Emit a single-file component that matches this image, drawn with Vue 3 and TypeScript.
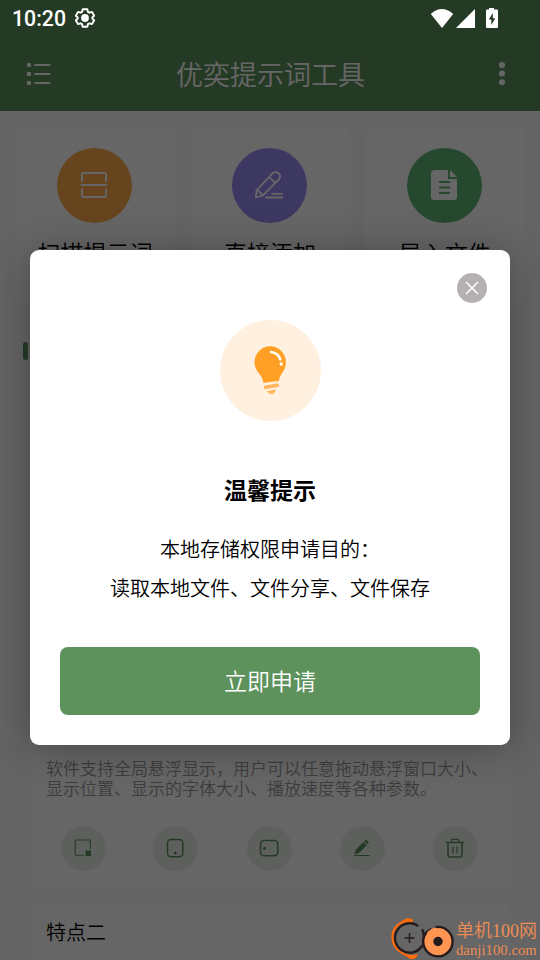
<script setup lang="ts">
interface Shortcut {
  label: string
  kind: 'scan' | 'edit' | 'file'
}

const shortcuts: Shortcut[] = [
  { label: '扫描提示词', kind: 'scan' },
  { label: '直接添加', kind: 'edit' },
  { label: '导入文件', kind: 'file' },
]

const tools: string[] = ['resize', 'portrait', 'landscape', 'pencil', 'trash']
</script>

<template>
  <div class="screen" lang="zh-CN">
    <header class="header">
      <svg class="menu" viewBox="0 0 24 24">
        <g fill="#fff">
          <rect x="0" y="1" width="4" height="4" rx="1" />
          <rect x="0" y="10" width="4" height="4" rx="1" />
          <rect x="0" y="19" width="4" height="4" rx="1" />
          <rect x="7" y="2" width="16.500" height="2" rx="1" />
          <rect x="7" y="11" width="16.500" height="2" rx="1" />
          <rect x="7" y="20" width="16.500" height="2" rx="1" />
        </g>
      </svg>
      <h1 class="title">优奕提示词工具</h1>
      <svg class="more" viewBox="0 0 6 24">
        <g fill="#fff">
          <circle cx="3" cy="3" r="3" />
          <circle cx="3" cy="11.600" r="3" />
          <circle cx="3" cy="20.300" r="3" />
        </g>
      </svg>
    </header>

    <section class="shortcuts">
      <div v-for="item in shortcuts" :key="item.kind" class="shortcut">
        <div class="disc" :class="item.kind">
          <svg v-if="item.kind === 'scan'" width="28" height="28" viewBox="0 0 28 28" fill="none" stroke="#fff" stroke-width="2">
            <path d="M2 11V3.500Q2 2 3.500 2H24.500Q26 2 26 3.500V11M2 17.500V24.500Q2 26 3.500 26H24.500Q26 26 26 24.500V17.500" />
            <path d="M1.500 14H26.500" stroke-linecap="round" />
          </svg>
          <svg v-else-if="item.kind === 'edit'" width="30" height="28" viewBox="0 0 30 28" fill="none" stroke="#fff" stroke-width="1.800" stroke-linejoin="round" stroke-linecap="round">
            <path d="M1.800 26.500L2.600 19.300L18.500 2.300C21.500 -.2 24.700 1.800 25.700 3.700C26.500 5.600 26 7.200 24.700 8.500L9 24.300L1.800 26.500Z" />
            <path d="M15.500 6.300L21 11.800M3.200 18.800L8.700 24M12 26.500H28.300M18 22.800H28.300" />
          </svg>
          <svg v-else width="28" height="32" viewBox="0 0 28 32">
            <path fill="#fff" d="M5 1H18V10H27V28Q27 31 24 31H4Q1 31 1 28V5Q1 1 5 1Z" />
            <path fill="#fff" d="M20 1V8H27Z" />
            <path class="lines" d="M9 13H20M9 18.500H20M9 24H20" fill="none" stroke-width="2" />
          </svg>
        </div>
        <span class="shortcut-label">{{ item.label }}</span>
      </div>
    </section>

    <div class="section-mark"></div>

    <section class="feature main-feature">
      <p class="desc">软件支持全局悬浮显示，用户可以任意拖动悬浮窗口大小、显示位置、显示的字体大小、播放速度等各种参数。</p>
      <div class="tools">
        <div v-for="tool in tools" :key="tool" class="tool" :class="tool">
          <svg width="20" height="20" viewBox="0 0 20 20" fill="none" stroke="#5d925d" stroke-width="1.500">
            <template v-if="tool === 'resize'">
              <path d="M17.300 11V2.500Q17.300 2 16.800 2H3Q2.200 2 2.200 2.800V16.500Q2.200 17.300 3 17.300H11" stroke-width="1.100" />
              <rect x="12.500" y="12.500" width="5.500" height="5.500" fill="#5d925d" stroke="none" />
            </template>
            <template v-else-if="tool === 'portrait'">
              <rect x="2.500" y="1.500" width="15.300" height="17.300" rx="3.500" />
              <circle cx="10.200" cy="15" r="1.500" fill="#5d925d" stroke="none" />
            </template>
            <template v-else-if="tool === 'landscape'">
              <rect x="1.500" y="2.500" width="17.300" height="15.300" rx="3.500" />
              <circle cx="5.500" cy="10.200" r="1.500" fill="#5d925d" stroke="none" />
            </template>
            <template v-else-if="tool === 'pencil'">
              <path d="M2.500 16.500L4 11.500L11.500 4L14.700 7.200L7 15Z" fill="#5d925d" stroke="none" />
              <path d="M12.300 3.200L13.500 2Q14 1.700 14.600 2.200L16.500 4.200Q17 4.700 16.500 5.200L15.500 6.400Z" fill="#5d925d" stroke="none" />
              <path d="M2 17.500H17.500" stroke-width="1" />
            </template>
            <template v-else>
              <path d="M.7 4.500H19.300M6.500 4V2Q6.500 1.300 7.200 1.300H12.800Q13.500 1.300 13.500 2V4" stroke-width="1.300" />
              <path d="M3 4.500V17Q3 19 5 19H15Q17 19 17 17V4.500" />
              <path d="M8 8.500V15.500M12 8.500V15.500" stroke-width="1.200" />
            </template>
          </svg>
        </div>
      </div>
    </section>

    <section class="feature next-feature">
      <h2 class="feature-title">特点二</h2>
    </section>

    <div class="mask">
      <div class="dialog">
        <button class="close" aria-label="关闭">
          <svg width="14" height="14" viewBox="0 0 14 14">
            <path d="M1.500 1.500L12.500 12.500M12.500 1.500L1.500 12.500" stroke="#fff" stroke-width="1.500" stroke-linecap="round" />
          </svg>
        </button>
        <div class="bulb">
          <svg width="101" height="101" viewBox="0 0 101 101">
            <path d="M43.500 63C42.500 54 34.500 52 34.500 42A15.700 15.700 0 0 1 65.900 42C66 52 59.500 53 59 61Q51 61.300 43.500 63Z" fill="#ffa024" />
            <path d="M51 32Q58.500 33 60.300 39.500" fill="none" stroke="#fff" stroke-width="2.600" stroke-linecap="round" />
            <circle cx="61.200" cy="44" r="1.700" fill="#fff" />
            <path d="M45.500 67.300L57.300 65.300" stroke="#ffb65c" stroke-width="3.700" stroke-linecap="round" />
            <path d="M46.500 71.300L55.500 69.500C55.500 73 52.800 74.500 50.500 74C48.500 73.500 48 72 46.500 71.300Z" fill="#ffb65c" />
          </svg>
        </div>
        <h2 class="dialog-title">温馨提示</h2>
        <p class="dialog-text">本地存储权限申请目的<span class="colon">：</span><br />读取本地文件、文件分享、文件保存</p>
        <button class="apply">立即申请</button>
      </div>
    </div>

    <div class="status">
      <span class="time">10:20</span>
      <svg class="gear" width="20" height="20" viewBox="0 0 20 20">
        <path d="M7.700 1.200H12.300L12.900 3.800L14.500 4.700L17 3.900L19.200 7.700L17.300 9.400V10.600L19.200 12.300L17 16.100L14.500 15.300L12.900 16.200L12.300 18.800H7.700L7.100 16.200L5.500 15.300L3 16.100L.8 12.300L2.700 10.600V9.400L.8 7.700L3 3.900L5.500 4.700L7.100 3.800Z" fill="none" stroke="#fff" stroke-width="1.900" stroke-linejoin="round" />
        <circle cx="10" cy="10" r="3.900" fill="#fff" />
      </svg>
      <svg class="signals" width="68" height="22" viewBox="0 0 68 22" fill="#fff">
        <path d="M.8 7Q11.800-3 23.200 7L12 21Z" />
        <path d="M45 2V21H26Z" />
        <path fill-rule="evenodd" d="M59 1H64V2.500H67Q68 2.500 68 3.500V20Q68 21 67 21H57Q56 21 56 20V3.500Q56 2.500 57 2.500H59ZM62.800 6L58.800 12.600H61.300V18L65.300 11.300H62.800Z" />
      </svg>
    </div>

    <div class="watermark">
      <svg width="66" height="44" viewBox="0 0 66 44" fill="none">
        <path d="M22 4.500C10 4 2.500 12 2.500 21C2.500 31 10 38 21 40.500" stroke="#ff6b0a" stroke-width="2.200" />
        <path d="M10 7C14 2 20 1 23 4L22 7Q15 5 10 8ZM15 38Q21 40 28 38Q26 44 21 43Q17 42 15 38Z" fill="#ff6b0a" />
        <path d="M27.500 9.500A14.700 14.700 0 1 0 32 30" stroke="#251b1c" stroke-width="2.300" stroke-linecap="round" />
        <path d="M19.500 17V27M14.500 22H24.500" stroke="#251b1c" stroke-width="1.500" />
        <path d="M32.500 14Q35 20 33 28M36 18Q37 15 40.500 13.500" stroke="#251b1c" stroke-width="2.300" stroke-linecap="round" />
        <circle cx="48" cy="25.500" r="14" fill="#ff9550" />
        <path d="M46.500 11A14.700 14.700 0 1 1 36 17" stroke="#251b1c" stroke-width="2.300" stroke-linecap="round" />
        <circle cx="48" cy="25.500" r="4.700" fill="#251b1c" />
      </svg>
      <div class="brand">
        <span class="brand-name">单机100网</span>
        <span class="brand-url">danji100.com</span>
      </div>
    </div>
  </div>
</template>

<style>
body {
  margin: 0;
  overflow: hidden;
}
</style>

<style scoped>
.screen {
  position: relative;
  display: flex;
  flex-direction: column;
  width: 540px;
  height: 960px;
  overflow: hidden;
  background: #f9f9f9;
  color: #000;
  font-family: "Noto Sans CJK SC", sans-serif;
  font-weight: 350;
}

h1,
h2,
p {
  margin: 0;
  font-weight: inherit;
}

svg {
  display: block;
}

button {
  padding: 0;
  border: 0;
  font-family: inherit;
  font-weight: inherit;
}

.header {
  box-sizing: border-box;
  flex: none;
  display: flex;
  align-items: center;
  justify-content: space-between;
  height: 111px;
  padding: 37px 35px 0 27px;
  background: #5d925d;
  color: #fff;
}

.menu {
  width: 24px;
  height: 24px;
}

.title {
  margin: -1px 9px 0 0;
  font-size: 27px;
  line-height: 40px;
}

.more {
  width: 6px;
  height: 24px;
}

.shortcuts {
  flex: none;
  display: grid;
  grid-template-columns: repeat(3, 160px);
  gap: 15px;
  padding: 15px 15px 0;
}

.shortcut {
  box-sizing: border-box;
  display: flex;
  flex-direction: column;
  align-items: center;
  height: 180px;
  padding: 22px 1px 0 0;
  border-radius: 10px;
  background: #fff;
}

.disc {
  display: flex;
  align-items: center;
  justify-content: center;
  width: 75px;
  height: 75px;
  border-radius: 50%;
}

.disc svg {
  margin: -1px 1px 0 0;
}

.scan {
  background: #ffab4d;
}

.edit {
  background: #988cf5;
}

.file {
  background: #5fb473;
}

.lines {
  stroke: #5fb473;
}

.shortcut-label {
  margin-top: 12px;
  padding-left: 1px;
  font-size: 23px;
  line-height: 34px;
}

.section-mark {
  flex: none;
  width: 5px;
  height: 18px;
  margin: 36px 0 0 23px;
  border-radius: 3px;
  background: #5d925d;
}

.feature {
  box-sizing: border-box;
  flex: none;
  width: 480px;
  margin-left: 30px;
  border-radius: 8px;
  background: #fff;
}

.main-feature {
  display: flex;
  flex-direction: column;
  justify-content: flex-end;
  height: 507px;
  margin-top: 20px;
  padding-bottom: 16px;
}

.desc {
  padding: 0 16px;
  color: #999;
  font-size: 17px;
  line-height: 20px;
}

.tools {
  display: grid;
  grid-template-columns: repeat(5, 93px);
  justify-items: center;
  margin: 28px 0 0 7px;
}

.tool {
  display: flex;
  align-items: center;
  justify-content: center;
  width: 45px;
  height: 45px;
  border-radius: 50%;
  background: #e9efe9;
}

.tool svg {
  margin: -1px 0 0 -1px;
}

.portrait {
  margin-right: 2px;
}

.next-feature {
  height: 100px;
  margin-top: 15px;
  padding: 15px 16px;
}

.feature-title {
  font-size: 20px;
  line-height: 30px;
}

.mask {
  position: absolute;
  inset: 0;
  display: flex;
  justify-content: center;
  align-items: flex-start;
  padding-top: 250px;
  background: rgba(0, 0, 0, 0.6);
}

.dialog {
  box-sizing: border-box;
  display: flex;
  flex-direction: column;
  align-items: center;
  width: 480px;
  height: 495px;
  padding: 23px 23px 30px;
  border-radius: 9px;
  background: #fff;
  box-shadow: 0 3px 40px rgba(0, 0, 0, 0.3);
}

.close {
  align-self: flex-end;
  display: flex;
  align-items: center;
  justify-content: center;
  width: 30px;
  height: 30px;
  border-radius: 50%;
  background: #b5b1b1;
}

.bulb {
  width: 101px;
  height: 101px;
  margin-top: 17px;
  border-radius: 50%;
  background: #fff0e0;
}

.dialog-title {
  margin-top: 51px;
  font-size: 23px;
  font-weight: 700;
  line-height: 34px;
}

.dialog-text {
  margin-top: 23px;
  font-size: 20px;
  line-height: 39px;
  text-align: center;
}

.colon {
  padding-right: 10px;
  font-feature-settings: "halt";
}

.apply {
  width: 420px;
  height: 68px;
  margin-top: auto;
  padding-bottom: 2px;
  border-radius: 8px;
  background: #5d925d;
  color: #fff;
  font-size: 23px;
}

.status {
  position: absolute;
  top: 0;
  left: 0;
  display: flex;
  align-items: center;
  width: 498px;
  height: 36px;
  padding-left: 12px;
  box-sizing: border-box;
  color: #fff;
}

.time {
  font-family: Roboto, sans-serif;
  font-size: 21.300px;
  font-weight: 500;
  line-height: 26px;
  padding-top: 1px;
}

.gear {
  margin: 0 0 0 9px;
}

.signals {
  margin: -1px 0 0 auto;
}

.watermark {
  position: absolute;
  right: 3px;
  bottom: 0;
  display: flex;
  width: 147px;
  height: 44px;
}

.brand {
  display: flex;
  flex-direction: column;
  margin-top: 3px;
  color: #f08d53;
  font-family: "Liberation Serif", "Noto Sans CJK SC", serif;
  white-space: nowrap;
}

.brand-name {
  font-size: 18px;
  line-height: 24px;
}

.brand-url {
  font-size: 14.500px;
  line-height: 15px;
  letter-spacing: 0.12px;
}
</style>
